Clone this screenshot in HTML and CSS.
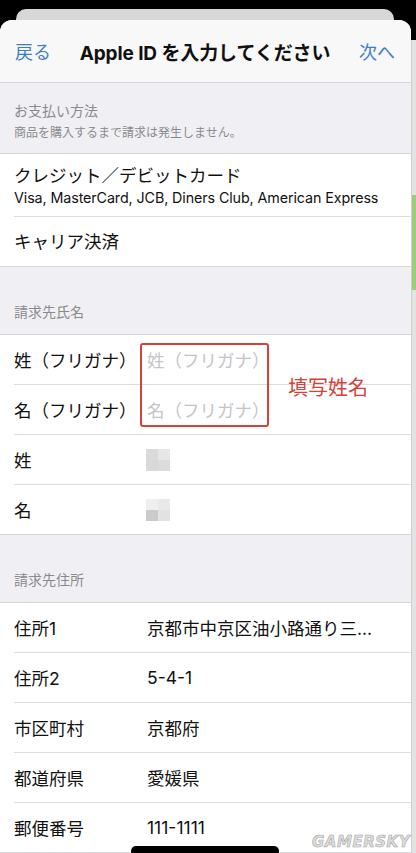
FILE: index.html
```html
<!DOCTYPE html>
<html lang="ja">
<head>
    <meta charset="UTF-8">
    <meta name="viewport" content="width=device-width, initial-scale=1.0">
    <title>Apple ID を入力してください</title>
    <link rel="stylesheet" href="styles.css">
</head>
<body>
    <div class="screen">
        <div class="peek"></div>
        <div class="main">
            <div class="sheet">
                <header class="navbar">
                    <span class="nav-btn">戻る</span>
                    <span class="nav-title">Apple ID を入力してください</span>
                    <span class="nav-btn">次へ</span>
                </header>

                <div class="group-head first">
                    <div class="head-title">お支払い方法</div>
                    <div class="head-sub">商品を購入するまで請求は発生しません。</div>
                </div>
                <div class="group">
                    <div class="row tall">
                        <div class="row-title">クレジット／デビットカード</div>
                        <div class="row-sub">Visa, MasterCard, JCB, Diners Club, American Express</div>
                    </div>
                    <div class="row">
                        <div class="row-title">キャリア決済</div>
                    </div>
                </div>

                <div class="group-head">
                    <div class="head-title">請求先氏名</div>
                </div>
                <div class="group">
                    <div class="row field">
                        <span class="label">姓（フリガナ）</span>
                        <span class="value placeholder">姓（フリガナ）</span>
                    </div>
                    <div class="row field">
                        <span class="label">名（フリガナ）</span>
                        <span class="value placeholder">名（フリガナ）</span>
                    </div>
                    <div class="row field">
                        <span class="label">姓</span>
                        <span class="value"><span class="blur one"><i></i><i></i><i></i><i></i></span></span>
                    </div>
                    <div class="row field">
                        <span class="label">名</span>
                        <span class="value"><span class="blur two"><i></i><i></i><i></i><i></i></span></span>
                    </div>
                </div>

                <div class="group-head">
                    <div class="head-title">請求先住所</div>
                </div>
                <div class="group">
                    <div class="row field">
                        <span class="label">住所1</span>
                        <span class="value">京都市中京区油小路通り三...</span>
                    </div>
                    <div class="row field">
                        <span class="label">住所2</span>
                        <span class="value">5-4-1</span>
                    </div>
                    <div class="row field">
                        <span class="label">市区町村</span>
                        <span class="value">京都府</span>
                    </div>
                    <div class="row field">
                        <span class="label">都道府県</span>
                        <span class="value">愛媛県</span>
                    </div>
                    <div class="row field">
                        <span class="label">郵便番号</span>
                        <span class="value">111-1111</span>
                    </div>
                </div>

                <!-- annotation drawn over the name fields -->
                <div class="mark-box"></div>
                <div class="mark-text">填写姓名</div>
            </div>
            <div class="edge"><div class="edge-green"></div></div>
        </div>
        <div class="home-bar"></div>
        <div class="watermark">GAMERSKY</div>
    </div>
</body>
</html>
```

FILE: styles.css
```css
body {
    margin: 0;
    background-color: #000;
    font-family: "Inter", "Noto Sans CJK JP", sans-serif;
    color: #111;
}

.screen {
    position: relative;
    width: 416px;
    height: 853px;
    overflow: hidden;
    display: flex;
    flex-direction: column;
}

.peek {
    height: 11px;
    margin: 9px 22px 0 16px;
    background-color: #d7d7d9;
    border-radius: 10px 10px 0 0;
}

.main {
    flex: 1;
    display: flex;
}

.sheet {
    position: relative;
    flex: 1;
    background-color: #fff;
    border-radius: 12px 12px 0 0;
    overflow: hidden;
}

.edge {
    width: 4px;
    margin-top: 20px;
    background-color: #e3e3e3;
    border-left: 1px solid #cfcfcf;
}

.edge-green {
    height: 95px;
    margin-top: 155px;
    background-color: #9ccc7c;
}

.navbar {
    height: 62px;
    display: flex;
    align-items: center;
    justify-content: space-between;
    padding: 0 16px 0 15px;
    background-color: #f8f8f8;
    border-bottom: 1px solid #d6d6d8;
}

.nav-btn {
    font-size: 18px;
    color: #3f7fc6;
}

.nav-title {
    font-size: 19px;
    font-weight: 700;
    letter-spacing: -0.1px;
}

.group-head {
    height: 67px;
    display: flex;
    flex-direction: column;
    justify-content: flex-end;
    padding: 0 14px 13px;
    box-sizing: border-box;
    background-color: #f0f0f4;
    color: #8a8a8e;
}

.group-head.first {
    height: 70px;
    padding-bottom: 12px;
}

.head-title {
    font-size: 14px;
    line-height: 18px;
}

.head-sub {
    font-size: 12px;
    line-height: 16px;
    margin-top: 5px;
}

.group {
    border-top: 1px solid #d6d6d8;
    border-bottom: 1px solid #d6d6d8;
    background-color: #fff;
}

.row {
    height: 49px;
    margin-left: 14px;
    display: flex;
    flex-direction: column;
    justify-content: center;
    border-bottom: 1px solid #dcdcde;
}

.row:last-child {
    border-bottom: none;
}

.row.tall {
    height: 63px;
    padding-top: 1px;
    box-sizing: border-box;
}

.row-title {
    font-size: 17.5px;
    line-height: 22px;
}

.row-sub {
    font-size: 14.3px;
    line-height: 18px;
    margin-top: 2px;
    letter-spacing: -0.1px;
}

.row.field {
    flex-direction: row;
    align-items: center;
    justify-content: flex-start;
}

.label {
    width: 133px;
    font-size: 17.5px;
}

.value {
    font-size: 17.5px;
}

.placeholder {
    color: #c5c5c8;
}

.blur {
    display: grid;
    grid-template-columns: 12px 12px;
    grid-template-rows: 11px 11px;
    margin-left: -1px;
}

.blur.one i:nth-child(1) { background-color: #dadada; }
.blur.one i:nth-child(2) { background-color: #e6e6e6; }
.blur.one i:nth-child(3) { background-color: #d9d9d9; }
.blur.one i:nth-child(4) { background-color: #dcdcdc; }

.blur.two i:nth-child(1) { background-color: #efefef; }
.blur.two i:nth-child(2) { background-color: #e9e9e9; }
.blur.two i:nth-child(3) { background-color: #cbcbcb; }
.blur.two i:nth-child(4) { background-color: #e2e2e2; }

.mark-box {
    position: absolute;
    left: 140px;
    top: 323px;
    width: 125px;
    height: 80px;
    border: 2.5px solid #d6423a;
    border-radius: 3px;
}

.mark-text {
    position: absolute;
    left: 288px;
    top: 352px;
    font-size: 20px;
    color: #d6423a;
}

.home-bar {
    position: absolute;
    left: 131px;
    bottom: -3px;
    width: 148px;
    height: 10px;
    background-color: #000;
    border-radius: 5px;
}

.watermark {
    position: absolute;
    right: 6px;
    bottom: 2px;
    font-family: "DejaVu Sans", sans-serif;
    font-size: 15px;
    font-weight: 700;
    font-style: italic;
    letter-spacing: 0.5px;
    color: #dedede;
    -webkit-text-stroke: 0.6px #a8a8a8;
}
```
